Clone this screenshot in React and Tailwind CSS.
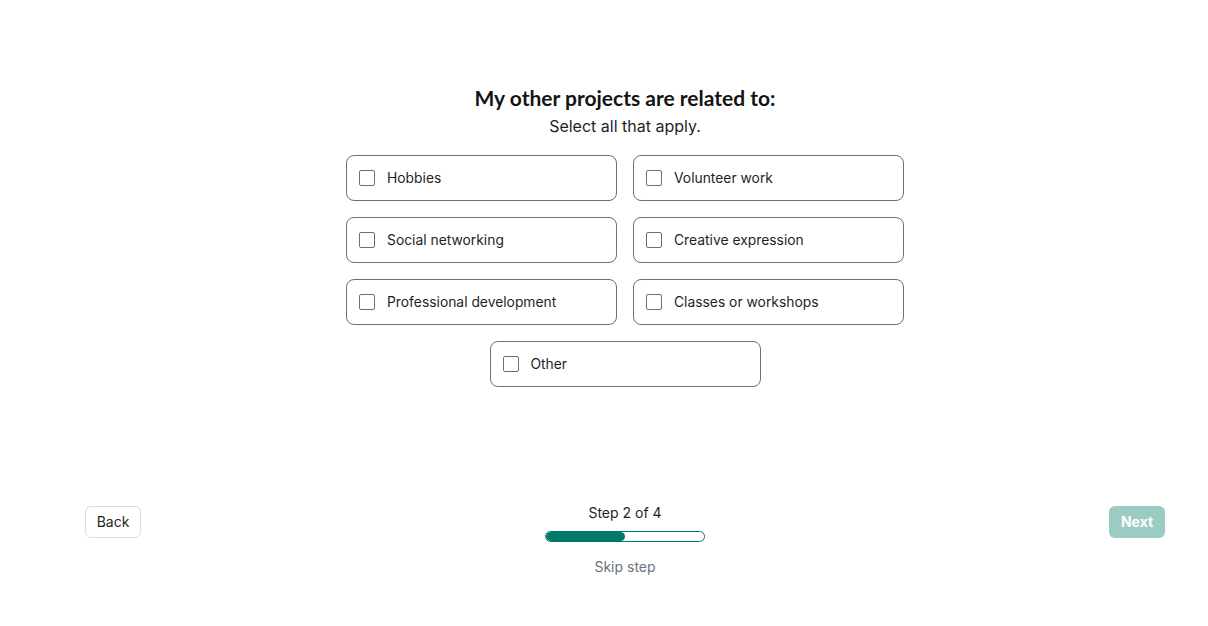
import React from "react";

const options = [
  "Hobbies",
  "Volunteer work",
  "Social networking",
  "Creative expression",
  "Professional development",
  "Classes or workshops",
];

function Option({ label }) {
  return (
    <label className="flex h-[46px] w-[271px] cursor-pointer items-center rounded-lg border border-[#6f6f6f] bg-white pl-[12px]">
      <span className="h-4 w-4 shrink-0 rounded-[2px] border border-[#6f6f6f] bg-white" />
      <span className="ml-[12px] text-[13.85px] text-[#1f1f1f]">{label}</span>
    </label>
  );
}

export default function App() {
  return (
    <div
      className="min-h-screen bg-white pl-[85px] pr-[43px] pt-[84px]"
      style={{ fontFamily: "Inter, 'Noto Sans', sans-serif" }}
    >
      <div className="flex flex-col items-center">
        <h1
          className="text-[21px] font-bold leading-[28px] text-[#141414]"
          style={{ fontFamily: "Lato, sans-serif" }}
        >
          My other projects are related to:
        </h1>
        <p className="mt-[2px] text-[16px] leading-[24px] text-[#1f1f1f]">
          Select all that apply.
        </p>
        <div className="mt-[17px] grid grid-cols-2 gap-x-[16px] gap-y-[16px]">
          {options.map((o) => (
            <Option key={o} label={o} />
          ))}
        </div>
        <div className="mt-[16px]">
          <Option label="Other" />
        </div>
      </div>

      <div className="mt-[116px] flex items-start justify-between">
        <button className="mt-[3px] h-[32px] w-[56px] rounded-md border border-[#dcdcdc] bg-white pb-[1px] text-[14px] text-[#1f1f1f]">
          Back
        </button>
        <div className="flex flex-col items-center">
          <div className="text-[14px] leading-[20px] text-[#1f1f1f]">Step 2 of 4</div>
          <div className="mt-[8px] h-[11px] w-[160px] overflow-hidden rounded-full border border-[#007a6b] bg-white">
            <div className="h-full rounded-full bg-[#007a6b]" style={{ width: "50%" }} />
          </div>
          <div className="mt-[15px] text-[14px] leading-[20px] text-[#6b7280]">Skip step</div>
        </div>
        <button className="mt-[3px] h-[32px] w-[56px] rounded-md bg-[#9ccbc4] pb-[1px] text-[14px] font-bold text-white">
          Next
        </button>
      </div>
    </div>
  );
}
